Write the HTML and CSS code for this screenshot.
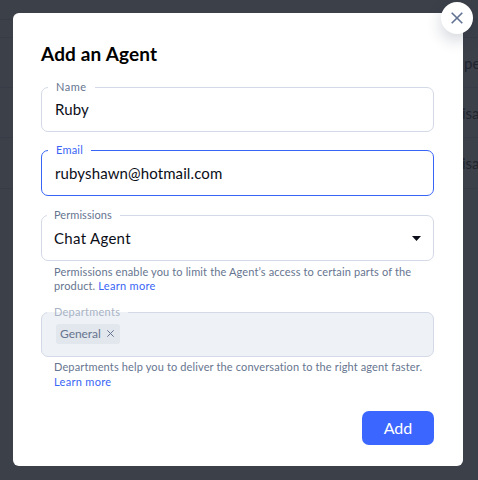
FILE: index.html
```html
<!DOCTYPE html>
<html lang="en">
<head>
    <meta charset="UTF-8">
    <meta name="viewport" content="width=device-width, initial-scale=1.0">
    <title>Add an Agent</title>
    <link rel="stylesheet" href="styles.css">
</head>
<body>
    <div class="agents-list">
        <div class="row row-top"></div>
        <div class="row row-head"></div>
        <div class="row"><span class="cell cell-type">pe</span></div>
        <div class="row"><span class="cell">isa</span></div>
        <div class="row"><span class="cell">isa</span></div>
    </div>

    <div class="modal">
        <button class="close" type="button" aria-label="Close">
            <svg width="12" height="12" viewBox="0 0 12 12"><path d="M.7 .7L11.3 11.3M11.3 .7L.7 11.3"/></svg>
        </button>
        <h1 class="title">Add an Agent</h1>

        <div class="field name">
            <span class="label">Name</span>
            <span class="value">Ruby</span>
        </div>

        <div class="field email">
            <span class="label">Email</span>
            <span class="value">rubyshawn@hotmail.com</span>
        </div>

        <div class="field permissions">
            <span class="label">Permissions</span>
            <span class="value">Chat Agent</span>
            <svg class="caret" width="9" height="5" viewBox="0 0 9 5"><path d="M0 0H9L4.5 5Z"/></svg>
        </div>
        <p class="help help-permissions">Permissions enable you to limit the Agent’s access to certain parts of the<br>product. <a class="link">Learn more</a></p>

        <div class="field departments">
            <span class="label">Departments</span>
            <span class="tag"><span class="tag-name">General</span><svg width="7" height="7" viewBox="0 0 7 7"><path d="M.3 .3L6.7 6.7M6.7 .3L.3 6.7"/></svg></span>
        </div>
        <p class="help help-departments">Departments help you to deliver the conversation to the right agent faster.<br><a class="link">Learn more</a></p>

        <div class="actions">
            <button class="add" type="button">Add</button>
        </div>
    </div>
</body>
</html>
```
FILE: styles.css
```css
* {
    box-sizing: border-box;
}

body {
    margin: 0;
    width: 478px;
    height: 480px;
    overflow: hidden;
    position: relative;
    background: #3c4049;
    font-family: Lato, sans-serif;
    color: #0b0e18;
}

/* dimmed table behind the dialog */
.row {
    height: 50px;
    border-bottom: 1px solid #383c47;
    display: flex;
    align-items: center;
    padding-left: 462px;
    overflow: hidden;
}

.row-top {
    height: 20px;
}

.row-head {
    height: 18px;
}

.row:last-child {
    height: 51px;
}

.cell {
    font-size: 15px;
    color: #20242f;
}

.cell-type {
    padding-left: 2px;
}

.modal {
    position: absolute;
    top: 13px;
    left: 13px;
    width: 450px;
    height: 453px;
    padding: 29px 29px 21px 28px;
    background: #fff;
    border-radius: 6px;
}

.close {
    position: absolute;
    top: -11px;
    right: -10px;
    width: 32px;
    height: 32px;
    padding: 0;
    border: 0;
    border-radius: 50%;
    background: #fff;
    box-shadow: 0 6px 16px rgba(20, 35, 65, 0.2);
    display: flex;
    align-items: center;
    justify-content: center;
}

.close svg {
    fill: none;
    stroke: #5f7191;
    stroke-width: 1.6;
}

.title {
    margin: 0 0 21px;
    font-size: 19px;
    line-height: 24px;
    font-weight: 700;
    letter-spacing: 0.16px;
    color: #000;
    white-space: nowrap;
}

.field {
    position: relative;
    height: 46px;
    border: 1px solid #d3d9e6;
    border-radius: 7px;
    padding: 0 12px;
    display: flex;
    align-items: center;
    justify-content: space-between;
}

.name {
    height: 45px;
    padding: 0 13px 2px;
    margin-bottom: 18px;
}

.email {
    padding: 0 13px 1px;
    border-color: #3865f5;
    margin-bottom: 19px;
}

.departments {
    height: 45px;
    padding-bottom: 2px;
    background: #eef1f6;
}

/* the label sits over the top border and opens a notch in it */
.label {
    position: absolute;
    top: -9px;
    left: 5px;
    padding: 1px 8px 0 7px;
    background: #fff;
    font-size: 11px;
    line-height: 14px;
    letter-spacing: 0.06px;
    color: #66758f;
    white-space: nowrap;
}

.name .label,
.email .label {
    left: 6px;
    padding-left: 8px;
}

.name .label {
    letter-spacing: 0.5px;
}

.email .label {
    color: #3865f5;
    letter-spacing: 0.2px;
}

.departments .label {
    background: linear-gradient(#fff 8px, #eef1f6 8px);
    color: #a8b3c5;
    letter-spacing: 0.26px;
}

.value {
    font-size: 15px;
    line-height: 20px;
    letter-spacing: 0.11px;
    white-space: nowrap;
}

.permissions .value {
    letter-spacing: 0.3px;
}

.caret {
    fill: #0b0e18;
}

.help {
    margin: 0;
    padding: 4px 0 0 13px;
    font-size: 11px;
    line-height: 14px;
    letter-spacing: 0.135px;
    color: #66758f;
    white-space: nowrap;
}

.help-permissions {
    height: 51px;
}

.help-permissions .link {
    letter-spacing: 0.3px;
}

.help-departments {
    line-height: 15px;
    padding-top: 2px;
    height: 54px;
}

.help-departments .link {
    letter-spacing: 0.3px;
}

.link {
    color: #3865f5;
}

.tag {
    display: flex;
    align-items: center;
    justify-content: space-between;
    width: 64px;
    height: 20px;
    margin-left: 2px;
    padding: 0 6px 0 4px;
    border-radius: 3px;
    background: #e2e6ed;
    color: #66758f;
    font-size: 12px;
    letter-spacing: -0.05px;
}

.tag svg {
    fill: none;
    stroke: #66758f;
}

.actions {
    display: flex;
    justify-content: flex-end;
}

.add {
    width: 72px;
    height: 34px;
    padding: 0 0 2px;
    border: 0;
    border-radius: 7px;
    background: #3b66ff;
    color: #fff;
    font-family: inherit;
    font-size: 16px;
}
```
